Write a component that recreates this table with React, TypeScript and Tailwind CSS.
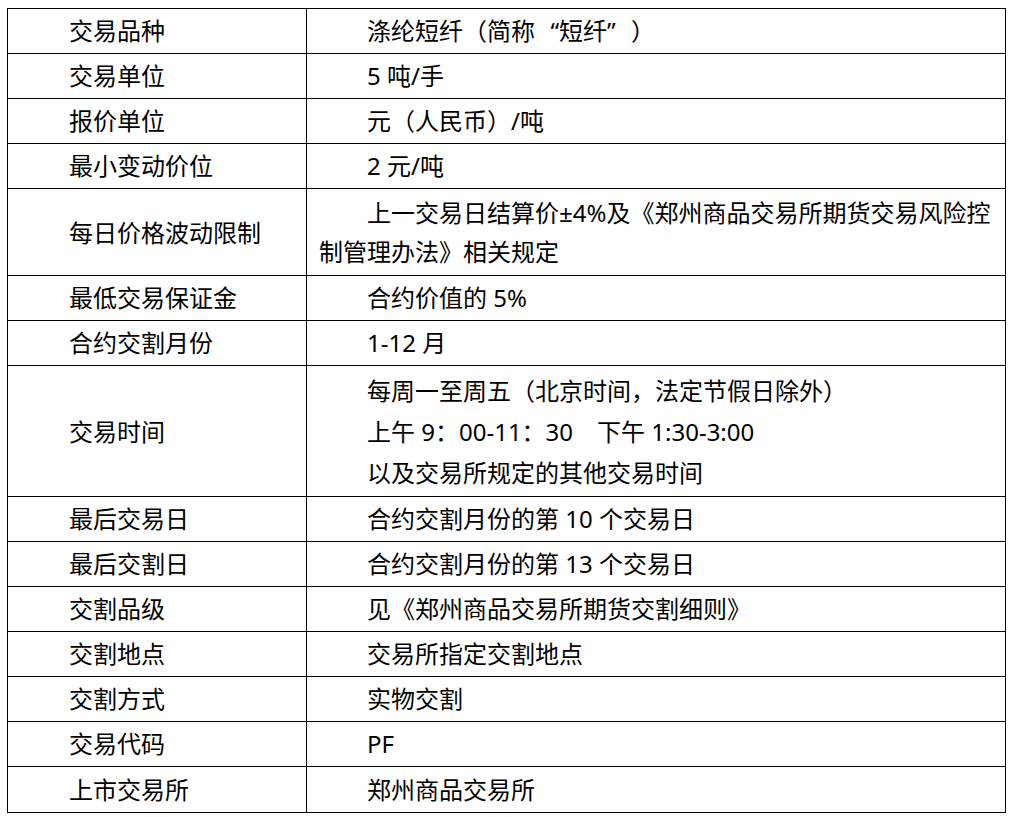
const rows: { label: string; lines: React.ReactNode[]; h: string; lh: string }[] = [
  {
    label: '交易品种',
    lines: [
      <>
        涤纶短纤（简称<span className="inline-block w-[24px] text-right indent-0">“</span>短纤
        <span className="inline-block w-[24px] text-left indent-0">”</span>）
      </>,
    ],
    h: 'h-[45px]',
    lh: 'leading-[40px]',
  },
  { label: '交易单位', lines: ['5 吨/手'], h: 'h-[45px]', lh: 'leading-[40px]' },
  { label: '报价单位', lines: ['元（人民币）/吨'], h: 'h-[45px]', lh: 'leading-[40px]' },
  { label: '最小变动价位', lines: ['2 元/吨'], h: 'h-[45px]', lh: 'leading-[40px]' },
  {
    label: '每日价格波动限制',
    lines: ['上一交易日结算价±4%及《郑州商品交易所期货交易风险控制管理办法》相关规定'],
    h: 'h-[87px]',
    lh: 'leading-[39px]',
  },
  { label: '最低交易保证金', lines: ['合约价值的 5%'], h: 'h-[45px]', lh: 'leading-[40px]' },
  { label: '合约交割月份', lines: ['1-12 月'], h: 'h-[45px]', lh: 'leading-[40px]' },
  {
    label: '交易时间',
    lines: [
      '每周一至周五（北京时间，法定节假日除外）',
      <>上午 9：00-11：30　下午 1:30-3:00</>,
      '以及交易所规定的其他交易时间',
    ],
    h: 'h-[131px]',
    lh: 'leading-[41px]',
  },
  { label: '最后交易日', lines: ['合约交割月份的第 10 个交易日'], h: 'h-[45px]', lh: 'leading-[40px]' },
  { label: '最后交割日', lines: ['合约交割月份的第 13 个交易日'], h: 'h-[45px]', lh: 'leading-[40px]' },
  { label: '交割品级', lines: ['见《郑州商品交易所期货交割细则》'], h: 'h-[45px]', lh: 'leading-[40px]' },
  { label: '交割地点', lines: ['交易所指定交割地点'], h: 'h-[45px]', lh: 'leading-[40px]' },
  { label: '交割方式', lines: ['实物交割'], h: 'h-[45px]', lh: 'leading-[40px]' },
  { label: '交易代码', lines: ['PF'], h: 'h-[45px]', lh: 'leading-[40px]' },
  { label: '上市交易所', lines: ['郑州商品交易所'], h: 'h-[46px]', lh: 'leading-[40px]' },
];

export default function App() {
  return (
    <div className="min-h-screen bg-white pl-[7px] pt-[8px] text-black font-['Noto_Sans','Noto_Sans_CJK_SC',sans-serif] text-[24px]">
      <table className="w-[999px] border-collapse border border-black table-fixed">
        <colgroup>
          <col className="w-[299px]" />
          <col />
        </colgroup>
        <tbody>
          {rows.map((r) => (
            <tr key={r.label} className={r.h}>
              <td className={`border border-black pl-[13px] pr-[13px] indent-[48px] align-middle ${r.lh}`}>
                {r.label}
              </td>
              <td className={`border border-black pl-[12px] pr-[12px] align-middle ${r.lh}`}>
                {r.lines.map((l, i) => (
                  <div key={i} className="indent-[48px]">
                    {l}
                  </div>
                ))}
              </td>
            </tr>
          ))}
        </tbody>
      </table>
    </div>
  );
}
